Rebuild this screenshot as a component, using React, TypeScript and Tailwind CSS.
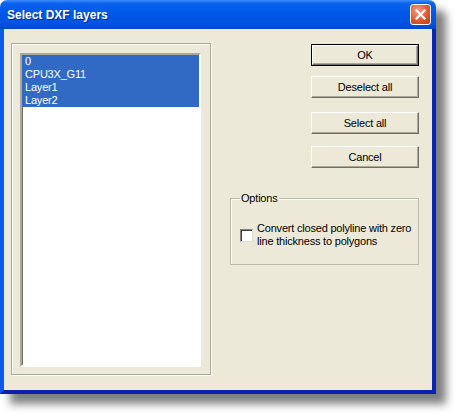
import React from "react";

const layers = ["0", "CPU3X_G11", "Layer1", "Layer2"];

function Btn({ label, primary }: { label: string; primary?: boolean }) {
  return (
    <div
      className={`w-[108px] h-[22px] ${
        primary ? "border border-black" : ""
      } bg-[#ECE9D8]`}
    >
      <div className="h-full w-full flex items-center justify-center border-t border-l border-white border-r border-b border-r-[#716F64] border-b-[#716F64] shadow-[inset_-1px_-1px_0_#ACA899] text-[11px] leading-[13px] tracking-[-0.2px] text-black">
        {label}
      </div>
    </div>
  );
}

export default function App() {
  return (
    <div
      className="w-[456px] h-[413px] bg-white"
      style={{ fontFamily: '"Liberation Sans", Arial, sans-serif' }}
    >
      <div className="w-[436px] h-[394px] flex flex-col rounded-t-[7px] shadow-[10px_10px_9px_rgba(0,0,0,0.5)]">
        {/* title bar */}
        <div className="h-[29px] shrink-0 rounded-t-[7px] flex items-center pl-[7px] pr-[5px] bg-[linear-gradient(to_bottom,#3D8EFB_0%,#0A61EE_12%,#0058E6_45%,#0054E2_80%,#0046CE_100%)]">
          <span className="text-white font-bold text-[12px] leading-[14px] [text-shadow:1px_1px_0_#0A2A8A]">
            Select DXF layers
          </span>
          <div className="ml-auto w-[21px] h-[21px] rounded-[3px] border border-white bg-[radial-gradient(circle_at_35%_30%,#F0A084_0%,#DC5A32_55%,#C2390F_100%)] flex items-center justify-center">
            <svg width="11" height="11" viewBox="0 0 11 11">
              <path d="M1.5 1.5 L9.5 9.5 M9.5 1.5 L1.5 9.5" stroke="white" strokeWidth="2.2" strokeLinecap="square" />
            </svg>
          </div>
        </div>

        {/* body */}
        <div className="flex-1 flex bg-[#ECE9D8] border-l-[4px] border-l-[#0B5BE8] border-r-[4px] border-r-[#0A24B8] border-b-[4px] border-b-[#0A20A8]">
          <div className="ml-[7px] mt-[14px] w-[200px] h-[332px] border border-[#ACA899] shadow-[inset_1px_1px_0_#fff,1px_1px_0_#fff] pt-[9px] pl-[8px]">
            <div className="w-[181px] h-[314px] bg-white border-2 border-t-[#ACA899] border-l-[#ACA899] border-r-white border-b-white shadow-[inset_1px_1px_0_#716F64]">
              {layers.map((l) => (
                <div
                  key={l}
                  className="h-[13px] bg-[#316AC5] text-white text-[11px] leading-[13px] tracking-[-0.2px] pl-[3px]"
                >
                  {l}
                </div>
              ))}
            </div>
          </div>

          <div className="ml-[19px] w-[189px] flex flex-col">
            <div className="self-end flex flex-col">
              <div className="mt-[15px]">
                <Btn label="OK" primary />
              </div>
              <div className="mt-[10px]">
                <Btn label="Deselect all" />
              </div>
              <div className="mt-[14px]">
                <Btn label="Select all" />
              </div>
              <div className="mt-[12px]">
                <Btn label="Cancel" />
              </div>
            </div>

            <fieldset className="mt-[24px] w-[189px] h-[73px] border border-[#BDBAAC] shadow-[inset_1px_1px_0_#fff] pl-[9px] pt-[17px]">
              <legend className="px-[1px] text-[11px] leading-[13px] tracking-[-0.2px] text-black">Options</legend>
              <div className="flex items-center">
                <div className="w-[13px] h-[13px] shrink-0 bg-white border border-t-[#808080] border-l-[#808080] border-r-[#E0DED4] border-b-[#E0DED4] shadow-[inset_1px_1px_0_#404040]" />
                <div className="ml-[4px] text-[11px] leading-[13px] tracking-[-0.2px] text-black">
                  Convert closed polyline with zero
                  <br />
                  line thickness to polygons
                </div>
              </div>
            </fieldset>
          </div>
        </div>
      </div>
    </div>
  );
}
